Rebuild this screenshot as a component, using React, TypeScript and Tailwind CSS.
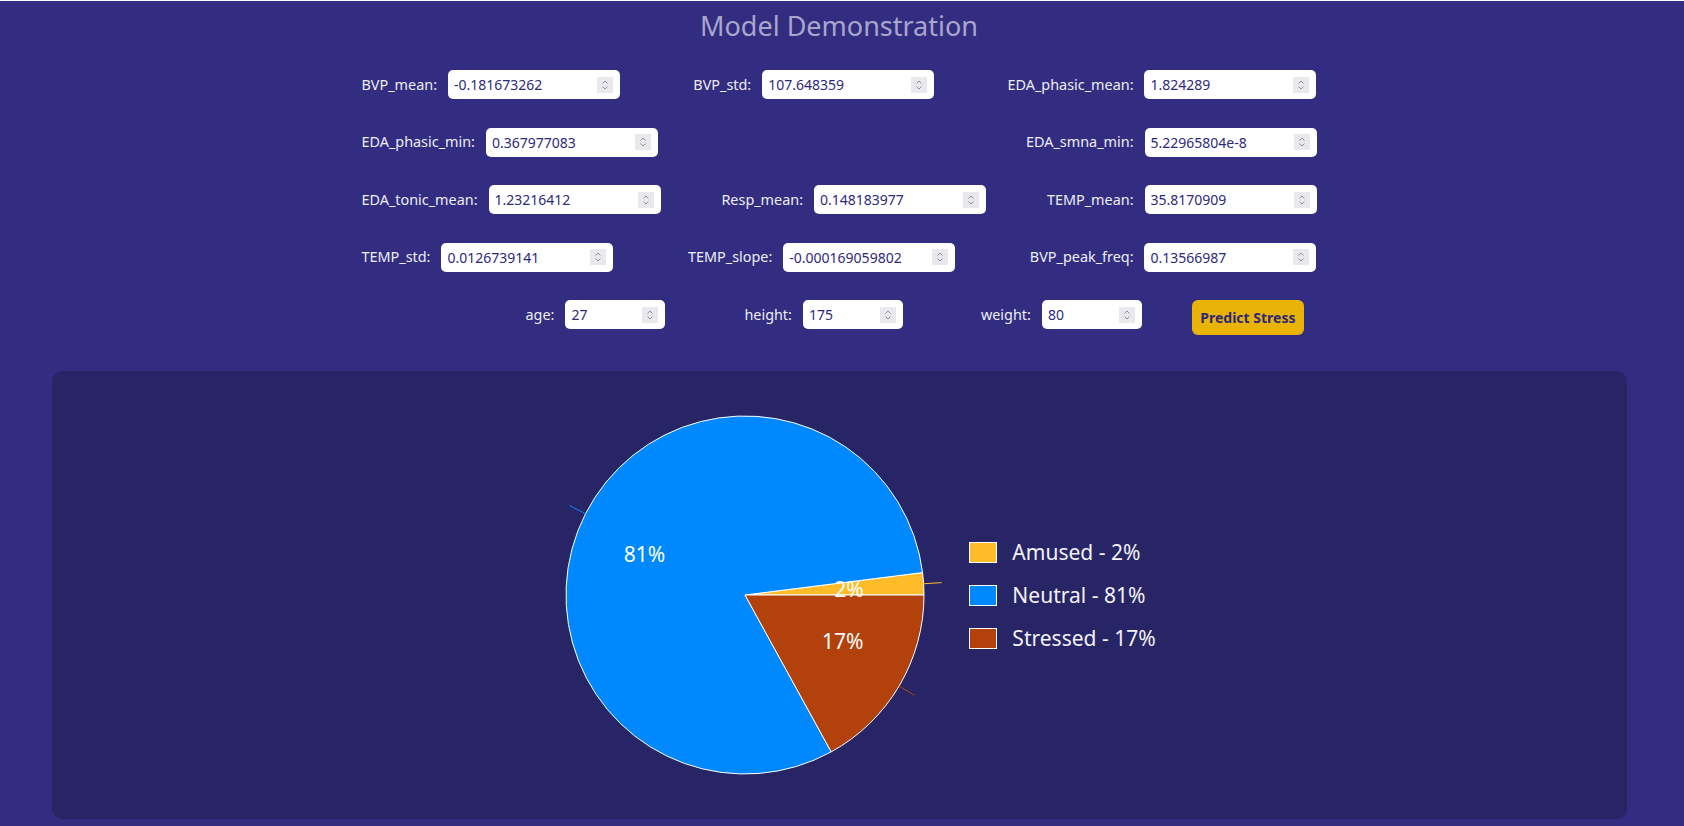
import React from 'react';

type FieldProps = { label: string; value: string; wide?: boolean };

function Spinner() {
  return (
    <span className="flex h-[16px] w-[16px] shrink-0 items-center justify-center bg-[#e9e9ed]">
      <svg width="16" height="16" viewBox="0 0 16 16" fill="none">
        <path d="M5.5 6.5 L8 4 L10.5 6.5" stroke="#8f8f9d" strokeWidth="1" />
        <path d="M5.5 9.5 L8 12 L10.5 9.5" stroke="#8f8f9d" strokeWidth="1" />
      </svg>
    </span>
  );
}

function Field({ label, value, wide = true }: FieldProps) {
  return (
    <div className="flex items-center gap-[11px]">
      <label className="text-[14.4px] text-[#ededf5]">{label}:</label>
      <div
        className={`flex h-[29px] items-center rounded-[5px] bg-white pl-[6px] pr-[7px] ${
          wide ? 'w-[172px]' : 'w-[100px]'
        }`}
      >
        <input
          type="text"
          readOnly
          value={value}
          className="min-w-0 flex-1 bg-transparent text-[14px] text-[#2e2a7a] outline-none"
        />
        <Spinner />
      </div>
    </div>
  );
}

const slices = [
  { name: 'Amused', pct: 2, color: '#ffbb28', d: 'M200,200 L379,200 A179,179 0 0 0 377.59,177.57 Z' },
  { name: 'Neutral', pct: 81, color: '#0088fe', d: 'M200,200 L377.59,177.57 A179,179 0 1 0 286.23,356.86 Z' },
  { name: 'Stressed', pct: 17, color: '#b2410b', d: 'M200,200 L286.23,356.86 A179,179 0 0 0 379,200 Z' },
];

function PieChart() {
  return (
    <svg width="400" height="400" viewBox="0 0 400 400" className="shrink-0">
      {slices.map((s) => (
        <path key={s.name} d={s.d} fill={s.color} stroke="#ffffff" strokeWidth="1" />
      ))}
      {/* label lines */}
      <line x1="378.65" y1="188.76" x2="396.6" y2="187.63" stroke="#ffbb28" strokeWidth="1" />
      <line x1="40.5" y1="118.7" x2="24.5" y2="110.6" stroke="#0088fe" strokeWidth="1" />
      <line x1="354.07" y1="291.12" x2="369.57" y2="300.28" stroke="#b2410b" strokeWidth="1" />
      <g fill="#ffffff" fontSize="21" fontFamily="'Noto Sans', sans-serif" dominantBaseline="central">
        <text x="289.3" y="194.4" textAnchor="start">2%</text>
        <text x="120.25" y="159.37" textAnchor="end">81%</text>
        <text x="277.04" y="245.56" textAnchor="start">17%</text>
      </g>
    </svg>
  );
}

export default function App() {
  return (
    <div className="min-h-screen border-t border-white bg-[#322d80] pr-[6px] font-['Noto_Sans',sans-serif]">
      <h1 className="pt-[5px] text-center text-[27px] leading-[40px] text-[#a9a6cd]">
        Model Demonstration
      </h1>

      <div className="mx-auto mt-[24px] flex w-[955px] flex-col gap-[28.5px]">
        <div className="flex justify-between">
          <Field label="BVP_mean" value="-0.181673262" />
          <Field label="BVP_std" value="107.648359" />
          <Field label="EDA_phasic_mean" value="1.824289" />
        </div>
        <div className="flex justify-between">
          <Field label="EDA_phasic_min" value="0.367977083" />
          <Field label="EDA_smna_min" value="5.22965804e-8" />
        </div>
        <div className="flex justify-between">
          <Field label="EDA_tonic_mean" value="1.23216412" />
          <Field label="Resp_mean" value="0.148183977" />
          <Field label="TEMP_mean" value="35.8170909" />
        </div>
        <div className="flex justify-between">
          <Field label="TEMP_std" value="0.0126739141" />
          <Field label="TEMP_slope" value="-0.000169059802" />
          <Field label="BVP_peak_freq" value="0.13566987" />
        </div>
        <div className="flex items-start pl-[164px]">
          <Field label="age" value="27" wide={false} />
          <div className="ml-[79px]">
            <Field label="height" value="175" wide={false} />
          </div>
          <div className="ml-[78px]">
            <Field label="weight" value="80" wide={false} />
          </div>
          <button className="ml-[50px] h-[35px] w-[112px] rounded-[6px] bg-[#eab308] text-[14px] font-bold text-[#2d2878]">
            Predict Stress
          </button>
        </div>
      </div>

      <div className="ml-[52px] mr-[51px] mt-[36px] flex h-[448px] items-center justify-center rounded-[10px] bg-[#282566] pl-[22px]">
        <PieChart />
        <div className="ml-[24px] flex flex-col gap-[22px]">
          {slices.map((s) => (
            <div key={s.name} className="flex items-center gap-[15px]">
              <span
                className="h-[21px] w-[28px] border border-white"
                style={{ backgroundColor: s.color }}
              />
              <span className="text-[21px] leading-[21px] text-[#f2f2f7]">
                {s.name} - {s.pct}%
              </span>
            </div>
          ))}
        </div>
      </div>
    </div>
  );
}
